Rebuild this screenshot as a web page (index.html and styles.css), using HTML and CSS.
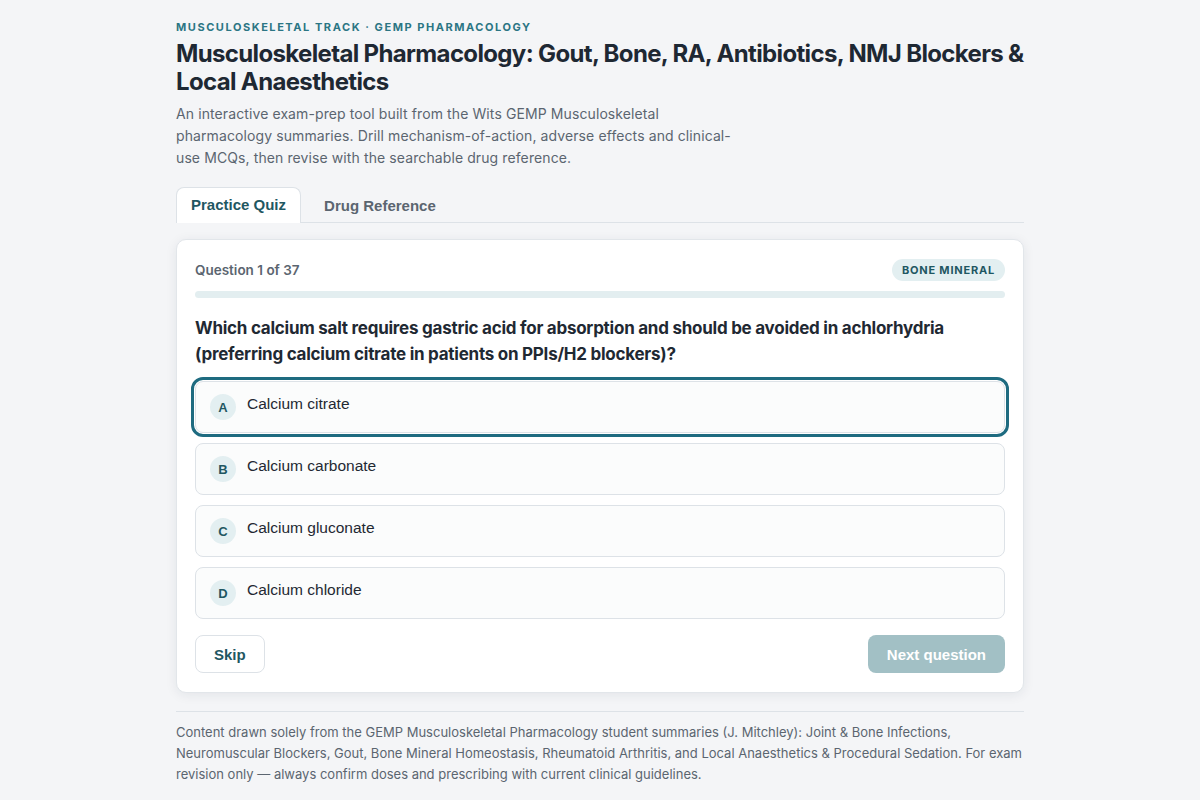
FILE: index.html
```html
<!DOCTYPE html>
<html lang="en">
<head>
    <meta charset="UTF-8" />
    <meta name="viewport" content="width=device-width, initial-scale=1" />
    <title>Musculoskeletal Pharmacology Quiz</title>
    <link rel="stylesheet" href="styles.css">
</head>
<body>
    <div class="page">
        <header class="intro">
            <div class="eyebrow">Musculoskeletal Track · GEMP Pharmacology</div>
            <h1>Musculoskeletal Pharmacology: Gout, Bone, RA, Antibiotics, NMJ Blockers &amp; Local Anaesthetics</h1>
            <p class="lead">An interactive exam-prep tool built from the Wits GEMP Musculoskeletal pharmacology summaries. Drill mechanism-of-action, adverse effects and clinical-use MCQs, then revise with the searchable drug reference.</p>
        </header>

        <nav class="tabs">
            <button class="tab active">Practice Quiz</button>
            <button class="tab">Drug Reference</button>
        </nav>

        <section class="card">
            <div class="card-head">
                <span class="counter">Question 1 of 37</span>
                <span class="topic">Bone Mineral</span>
            </div>
            <div class="progress"><div class="progress-fill" style="width: 0%;"></div></div>

            <h2 class="question">Which calcium salt requires gastric acid for absorption and should be avoided in achlorhydria (preferring calcium citrate in patients on PPIs/H2 blockers)?</h2>

            <div class="options">
                <button class="option focused"><span class="letter">A</span><span class="option-text">Calcium citrate</span></button>
                <button class="option"><span class="letter">B</span><span class="option-text">Calcium carbonate</span></button>
                <button class="option"><span class="letter">C</span><span class="option-text">Calcium gluconate</span></button>
                <button class="option"><span class="letter">D</span><span class="option-text">Calcium chloride</span></button>
            </div>

            <div class="actions">
                <button class="btn btn-ghost">Skip</button>
                <button class="btn btn-primary" disabled>Next question</button>
            </div>
        </section>

        <footer class="note">
            Content drawn solely from the GEMP Musculoskeletal Pharmacology student summaries (J. Mitchley): Joint &amp; Bone Infections, Neuromuscular Blockers, Gout, Bone Mineral Homeostasis, Rheumatoid Arthritis, and Local Anaesthetics &amp; Procedural Sedation. For exam revision only — always confirm doses and prescribing with current clinical guidelines.
        </footer>
    </div>
</body>
</html>
```

FILE: styles.css
```css
* {
    box-sizing: border-box;
}
body {
    margin: 0;
    font-family: Inter, "Noto Sans", sans-serif;
    background-color: #f4f5f7;
    color: #1f2a33;
}
.page {
    width: 848px;
    margin: 0 auto;
    padding-top: 20px;
}
.eyebrow {
    font-size: 11px;
    line-height: 14px;
    font-weight: 700;
    letter-spacing: 1.55px;
    text-transform: uppercase;
    color: #2b7584;
}
h1 {
    margin: 6px 0 0;
    font-size: 24px;
    line-height: 28px;
    font-weight: 700;
    color: #1e2833;
    letter-spacing: -0.65px;
}
.lead {
    margin: 7px 0 0;
    max-width: 562px;
    font-size: 14px;
    line-height: 22px;
    letter-spacing: 0.1px;
    color: #5b6570;
}
.tabs {
    display: flex;
    gap: 8px;
    margin-top: 18px;
    border-bottom: 1px solid #dde2e7;
}
.tab {
    font-family: "Liberation Sans", Arial, sans-serif;
    font-size: 15px;
    font-weight: 700;
    padding: 8px 14px 9px;
    line-height: 17px;
    border: 1px solid transparent;
    border-bottom: none;
    border-radius: 8px 8px 0 0;
    background: none;
    color: #5b6570;
    margin-bottom: -1px;
    cursor: pointer;
}
.tab.active {
    background-color: #fff;
    border-color: #dde2e7;
    color: #1f5762;
    padding-bottom: 10px;
}
.card {
    margin-top: 16px;
    background-color: #fff;
    border: 1px solid #e2e6ea;
    border-radius: 10px;
    padding: 18px 18px 19px;
    box-shadow: 0 2px 12px rgba(20, 40, 60, 0.08);
}
.card-head {
    display: flex;
    justify-content: space-between;
    align-items: center;
    height: 24px;
}
.counter {
    font-size: 13.5px;
    font-weight: 600;
    color: #5b6570;
}
.topic {
    background-color: #e3eff1;
    color: #1f5762;
    font-size: 11px;
    font-weight: 700;
    letter-spacing: 0.8px;
    text-transform: uppercase;
    padding: 4px 10px;
    line-height: 14px;
    border-radius: 11px;
}
.progress {
    margin-top: 9px;
    height: 7px;
    border-radius: 4px;
    background-color: #e3eef0;
    overflow: hidden;
}
.progress-fill {
    height: 100%;
    background-color: #1e6b80;
}
.question {
    margin: 17px 0 0;
    font-size: 17px;
    line-height: 26px;
    font-weight: 700;
    letter-spacing: -0.25px;
    color: #1f2933;
}
.options {
    display: flex;
    flex-direction: column;
    gap: 10px;
    margin-top: 14px;
}
.option {
    display: flex;
    align-items: flex-start;
    gap: 11px;
    width: 100%;
    padding: 12px 14px;
    text-align: left;
    background-color: #fbfcfc;
    border: 1px solid #dde2e7;
    border-radius: 8px;
    font-family: "Liberation Sans", Arial, sans-serif;
    font-size: 15.5px;
    color: #1f2933;
    cursor: pointer;
}
.option.focused {
    outline: 3px solid #1e6b80;
    outline-offset: 1px;
}
.letter {
    flex: none;
    width: 26px;
    height: 26px;
    border-radius: 50%;
    background-color: #e3eff1;
    color: #1f5762;
    font-size: 13px;
    font-weight: 700;
    display: flex;
    align-items: center;
    justify-content: center;
}
.option-text {
    line-height: 20px;
}
.actions {
    display: flex;
    justify-content: space-between;
    margin-top: 16px;
}
.btn {
    font-family: "Liberation Sans", Arial, sans-serif;
    font-size: 15px;
    font-weight: 700;
    height: 38px;
    padding: 0 18px;
    border-radius: 8px;
    cursor: pointer;
}
.btn-ghost {
    background-color: #fff;
    border: 1px solid #dde2e7;
    color: #1f5762;
}
.btn-primary {
    padding: 0 19px;
    background-color: #a2c0c5;
    border: none;
    color: #fff;
}
.btn-primary:disabled {
    cursor: not-allowed;
}
.note {
    margin-top: 18px;
    border-top: 1px solid #dde2e7;
    padding-top: 10px;
    font-size: 13px;
    line-height: 21px;
    color: #5b6570;
}
```
